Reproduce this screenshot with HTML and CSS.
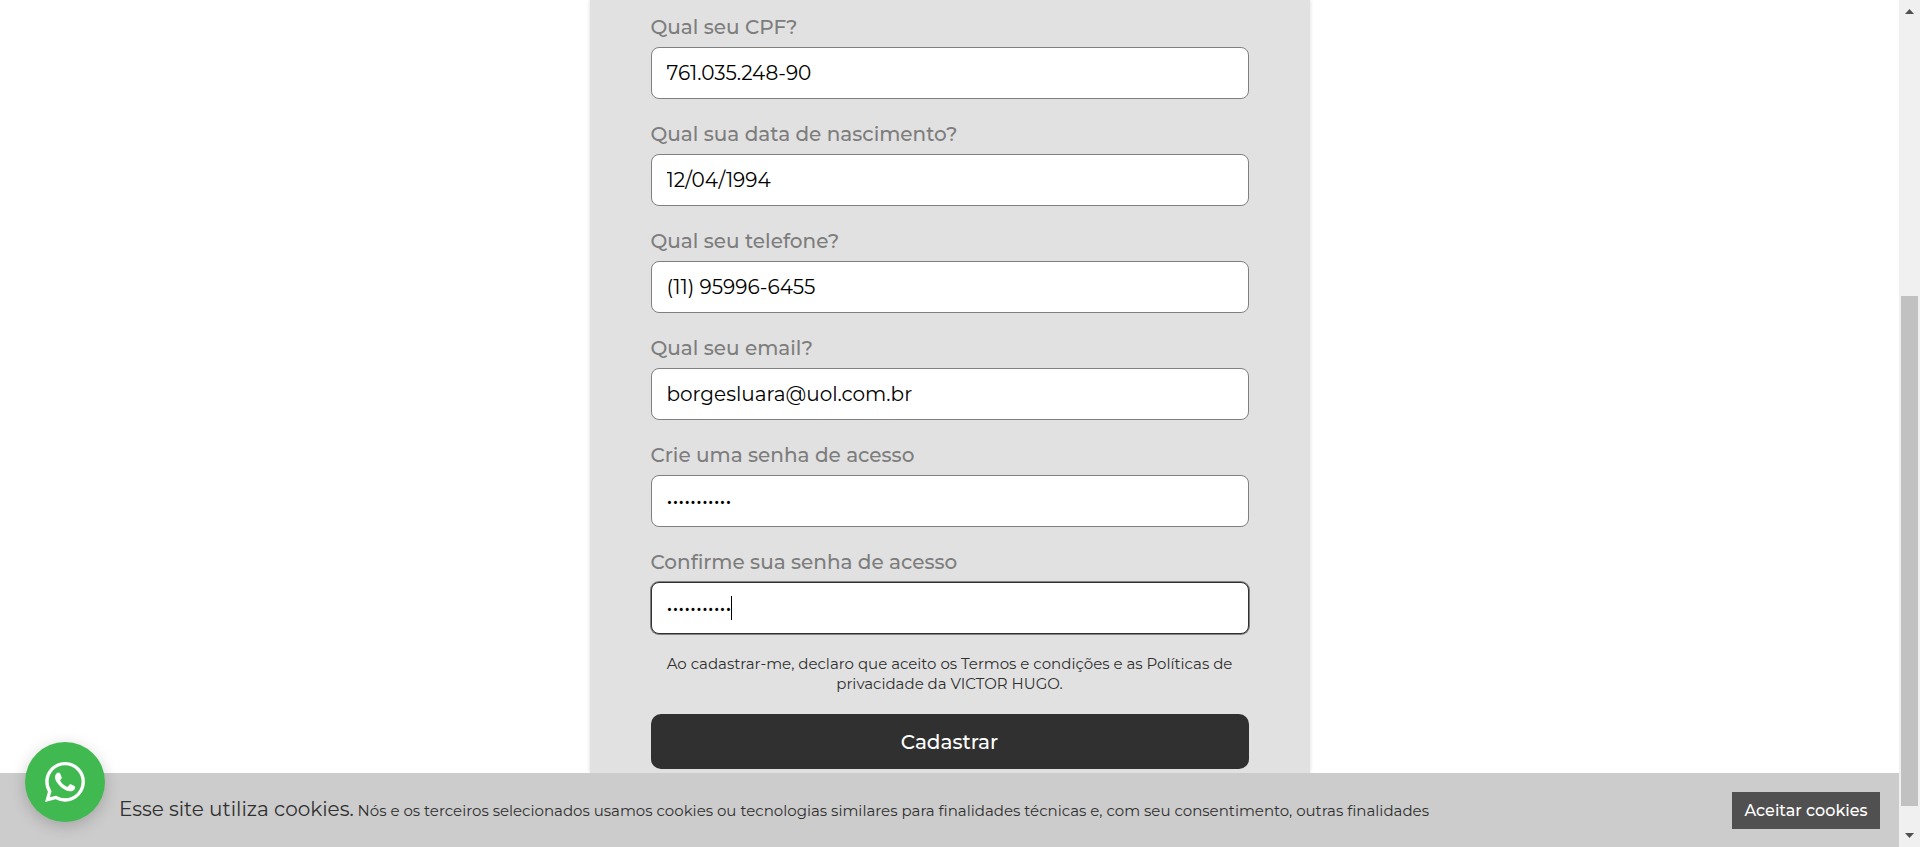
FILE: index.html
```html
<!DOCTYPE html>
<html lang="pt-BR">
<head>
<meta charset="utf-8">
<meta name="viewport" content="width=device-width, initial-scale=1">
<title>Cadastro</title>
<link rel="stylesheet" href="styles.css">
</head>
<body>
<div class="window">
  <div class="page">
    <main class="content">
      <form class="signup">
        <div class="field">
          <label for="cpf">Qual seu CPF?</label>
          <input id="cpf" type="text" value="761.035.248-90">
        </div>
        <div class="field">
          <label for="birth">Qual sua data de nascimento?</label>
          <input id="birth" type="text" value="12/04/1994">
        </div>
        <div class="field">
          <label for="phone">Qual seu telefone?</label>
          <input id="phone" type="tel" value="(11) 95996-6455">
        </div>
        <div class="field">
          <label for="email">Qual seu email?</label>
          <input id="email" type="email" value="borgesluara@uol.com.br">
        </div>
        <div class="field">
          <label for="password">Crie uma senha de acesso</label>
          <input id="password" type="password" value="abcdefghijk">
        </div>
        <div class="field field-active">
          <label for="confirm">Confirme sua senha de acesso</label>
          <input id="confirm" type="password" value="abcdefghijk">
          <span class="caret"></span>
        </div>
        <p class="terms">Ao cadastrar-me, declaro que aceito os Termos e condições e as Políticas de privacidade da VICTOR HUGO.</p>
        <button class="submit" type="button">Cadastrar</button>
      </form>
    </main>
    <aside class="cookies">
      <p class="cookies-text"><span class="cookies-title">Esse site utiliza cookies.</span> Nós e os terceiros selecionados usamos cookies ou tecnologias similares para finalidades técnicas e, com seu consentimento, outras finalidades</p>
      <button class="accept" type="button">Aceitar cookies</button>
    </aside>
    <a class="whatsapp" href="#" aria-label="WhatsApp">
      <svg viewBox="0 0 24 24" width="40" height="40" fill="#fff" aria-hidden="true"><path d="M17.472 14.382c-.297-.149-1.758-.867-2.03-.967-.273-.099-.471-.148-.67.15-.197.297-.767.966-.94 1.164-.173.199-.347.223-.644.075-.297-.15-1.255-.463-2.39-1.475-.883-.788-1.48-1.761-1.653-2.059-.173-.297-.018-.458.13-.606.134-.133.298-.347.446-.52.149-.174.198-.298.298-.497.099-.198.05-.371-.025-.52-.075-.149-.669-1.612-.916-2.207-.242-.579-.487-.5-.669-.51-.173-.008-.371-.01-.57-.01-.198 0-.52.074-.792.372-.272.297-1.04 1.016-1.04 2.479 0 1.462 1.065 2.875 1.213 3.074.149.198 2.096 3.2 5.077 4.487.709.306 1.262.489 1.694.625.712.227 1.36.195 1.871.118.571-.085 1.758-.719 2.006-1.413.248-.694.248-1.289.173-1.413-.074-.124-.272-.198-.57-.347m-5.421 7.403h-.004a9.87 9.87 0 01-5.031-1.378l-.361-.214-3.741.982.998-3.648-.235-.374a9.86 9.86 0 01-1.51-5.26c.001-5.45 4.436-9.884 9.888-9.884 2.640 0 5.122 1.03 6.988 2.898a9.825 9.825 0 012.893 6.994c-.003 5.45-4.437 9.884-9.885 9.884m8.413-18.297A11.815 11.815 0 0012.05 0C5.495 0 .16 5.335.157 11.892c0 2.096.547 4.142 1.588 5.945L.057 24l6.305-1.654a11.882 11.882 0 005.683 1.448h.005c6.554 0 11.89-5.335 11.893-11.893a11.821 11.821 0 00-3.48-8.413z"/></svg>
    </a>
  </div>
  <div class="scrollbar" aria-hidden="true">
    <svg viewBox="0 0 9 5" width="9" height="5"><path d="M0 5h9L4.500 0z" fill="#505050"/></svg>
    <div class="track"><div class="thumb"></div></div>
    <svg viewBox="0 0 9 5" width="9" height="5"><path d="M0 0h9L4.500 5z" fill="#505050"/></svg>
  </div>
</div>
</body>
</html>
```
FILE: styles.css
```css
* { box-sizing: border-box; }
body {
  margin: 0;
  background: #fff;
  color: #303030;
  font-family: Montserrat, Inter, sans-serif;
}
p { margin: 0; }
input, button { font-family: inherit; }

.window { display: flex; height: 100vh; overflow: hidden; }
.page { position: relative; flex: 1; min-width: 0; display: flex; flex-direction: column; }
.content { flex: 1; min-height: 0; overflow: hidden; padding: 0 16px; }

.signup {
  max-width: 720px;
  min-height: 100%;
  margin: 0 auto;
  padding: 15px 61px 4px;
  background: #e1e1e1;
  box-shadow: 0 0 4px rgba(0, 0, 0, .16);
}
.field { position: relative; margin-bottom: 23px; }
.field label {
  display: block;
  margin-bottom: 8px;
  font-size: 20px;
  line-height: 24px;
  font-weight: 500;
  color: #7d7d7d;
}
.field input {
  display: block;
  width: 100%;
  height: 52px;
  padding: 0 15px;
  border: 1px solid #808080;
  border-radius: 8px;
  background: #fff;
  color: #000;
  font-size: 20px;
  font-weight: 400;
  outline: 0;
}
.field-active { margin-bottom: 20px; }
.field-active input { border-color: #303030; box-shadow: 0 0 0 1px #808080; }
.caret { position: absolute; left: 80px; bottom: 14px; width: 1px; height: 24px; background: #000; }

.terms { font-size: 15px; line-height: 20px; font-weight: 400; text-align: center; }
.submit {
  display: block;
  width: 100%;
  height: 55px;
  margin-top: 20px;
  border: 0;
  border-radius: 10px;
  background: #303030;
  color: #fff;
  font-size: 20px;
  font-weight: 500;
}

.cookies {
  display: flex;
  align-items: center;
  justify-content: space-between;
  gap: 20px;
  min-height: 74px;
  padding: 0 19px 0 119px;
  background: #ccc;
}
.cookies-text { font-size: 15px; line-height: 24px; font-weight: 400; }
.cookies-title { font-size: 20px; }
.accept {
  flex: none;
  width: 148px;
  height: 37px;
  padding: 0;
  border: 0;
  background: #505050;
  color: #fff;
  font-size: 16px;
  font-weight: 500;
}

.whatsapp {
  position: absolute;
  left: 25px;
  bottom: 25px;
  display: flex;
  align-items: center;
  justify-content: center;
  width: 80px;
  height: 80px;
  border-radius: 50%;
  background: #40ba50;
  box-shadow: 0 4px 16px rgba(0, 0, 0, .2);
}

.scrollbar {
  flex: none;
  display: flex;
  flex-direction: column;
  align-items: center;
  width: 21px;
  padding: 9px 0;
  background: #f0f0f0;
}
.track { flex: 1; width: 17px; display: flex; flex-direction: column; padding: 7px 0; }
.track::before { content: ""; flex: 275; }
.thumb { flex: 510; background: #c1c1c1; }
.track::after { content: ""; flex: 20; }
```
